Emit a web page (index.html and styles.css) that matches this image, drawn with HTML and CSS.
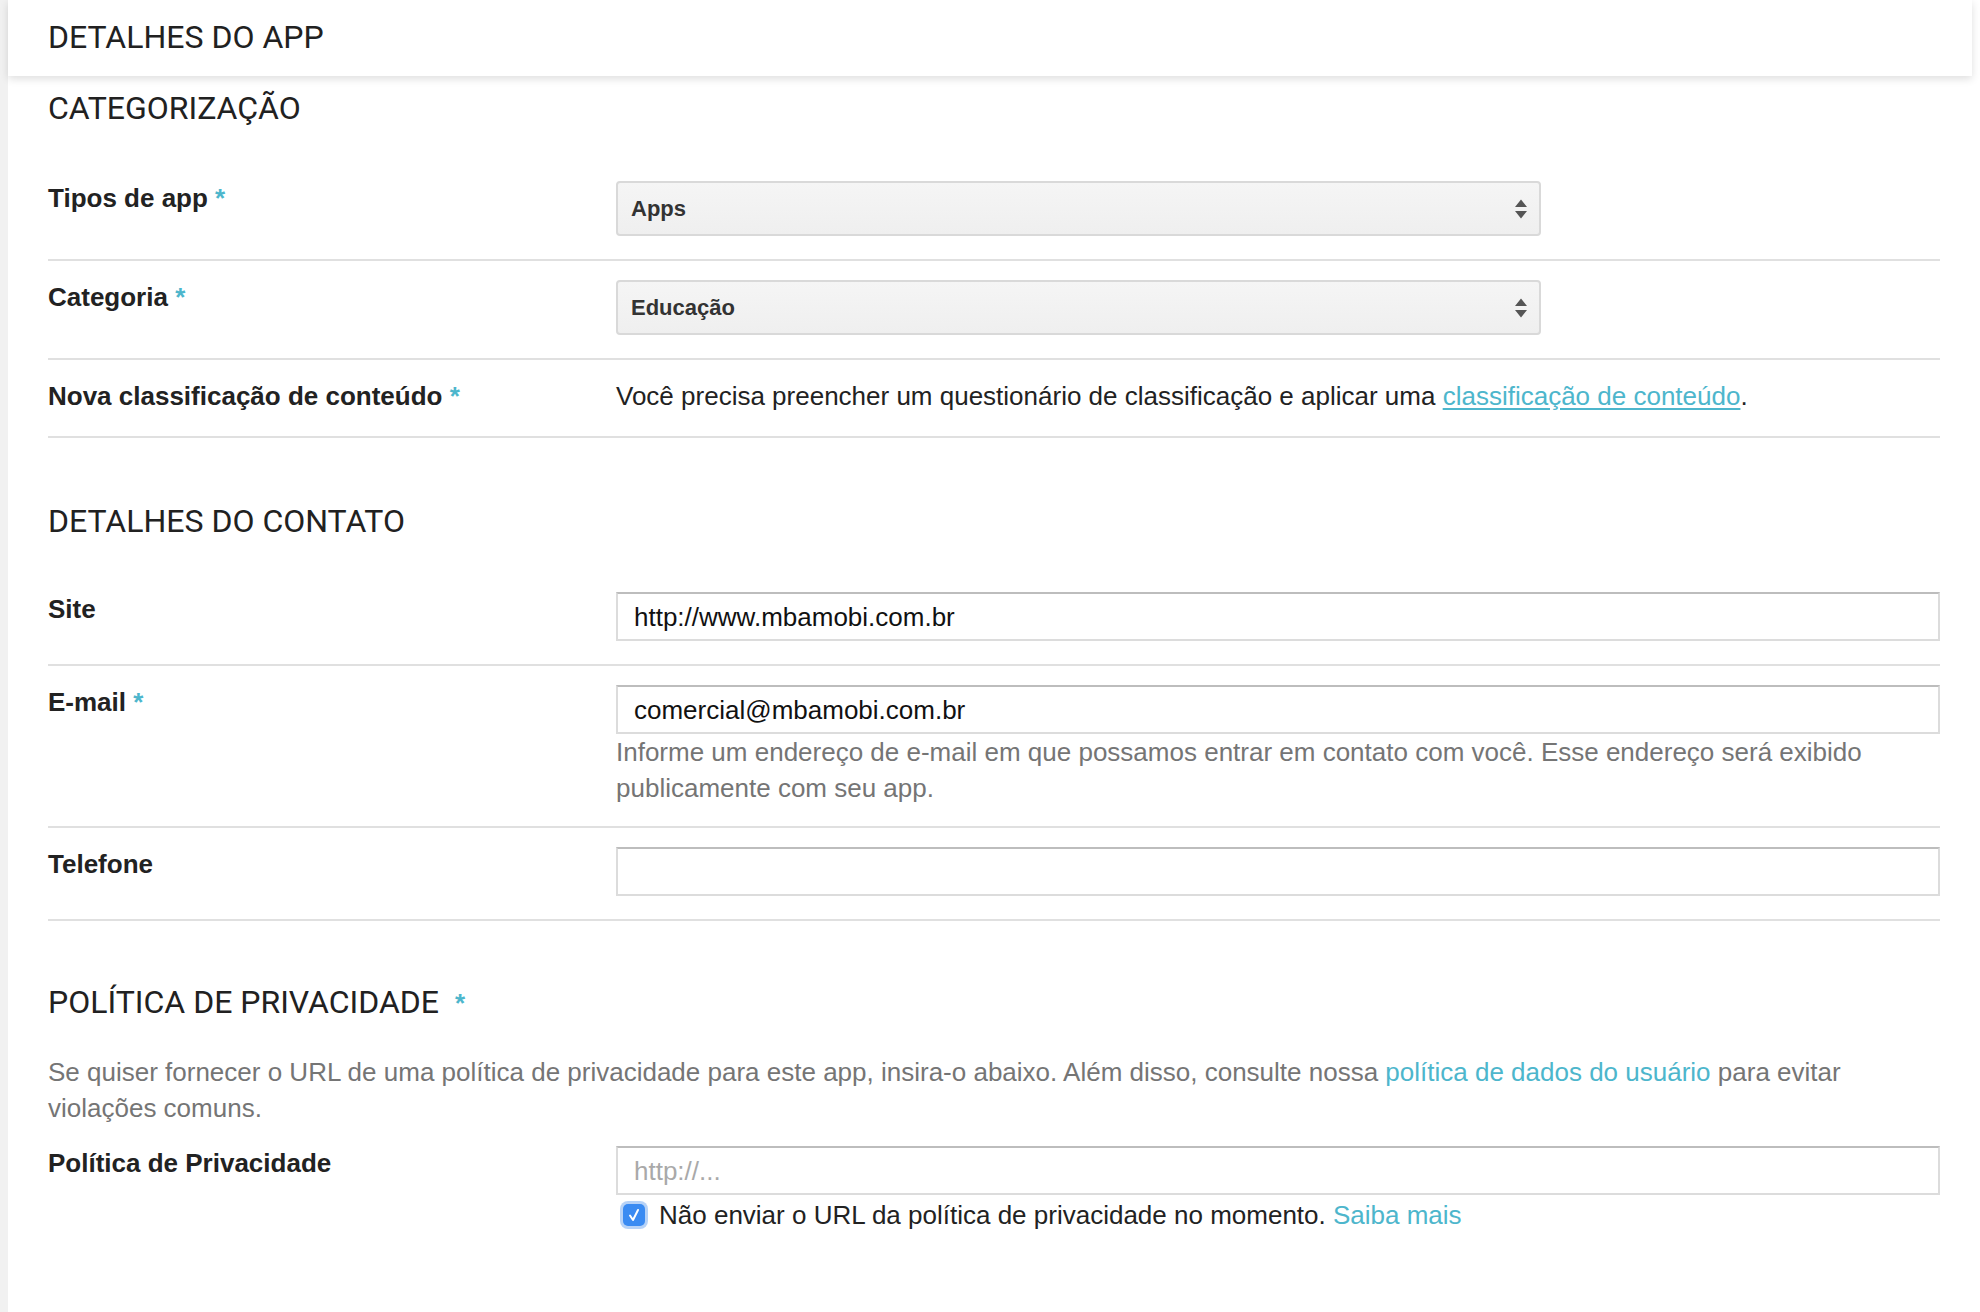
FILE: index.html
```html
<!DOCTYPE html>
<html lang="pt-BR">
<head>
<meta charset="utf-8">
<title>Detalhes do app</title>
<link rel="stylesheet" href="styles.css">
</head>
<body>
<div class="page">
  <header class="topbar">
    <h1 class="topbar-title">DETALHES DO APP</h1>
  </header>
  <main class="content">
    <h2 class="section-title first">CATEGORIZAÇÃO</h2>

    <div class="row">
      <div class="label">Tipos de app <span class="req">*</span></div>
      <div class="field">
        <div class="select">
          <span class="select-value">Apps</span>
          <svg class="select-arrows" width="14" height="22" viewBox="0 0 14 22"><path d="M1 9 L7 1.5 L13 9 Z M1 13 L13 13 L7 20.5 Z" fill="#555"/></svg>
        </div>
      </div>
    </div>

    <div class="row">
      <div class="label">Categoria <span class="req">*</span></div>
      <div class="field">
        <div class="select">
          <span class="select-value">Educação</span>
          <svg class="select-arrows" width="14" height="22" viewBox="0 0 14 22"><path d="M1 9 L7 1.5 L13 9 Z M1 13 L13 13 L7 20.5 Z" fill="#555"/></svg>
        </div>
      </div>
    </div>

    <div class="row">
      <div class="label">Nova classificação de conteúdo <span class="req">*</span></div>
      <div class="field text">Você precisa preencher um questionário de classificação e aplicar uma <a class="link underline" href="#">classificação de conteúdo</a>.</div>
    </div>

    <h2 class="section-title">DETALHES DO CONTATO</h2>

    <div class="row">
      <div class="label">Site</div>
      <div class="field">
        <div class="input">http://www.mbamobi.com.br</div>
      </div>
    </div>

    <div class="row">
      <div class="label">E-mail <span class="req">*</span></div>
      <div class="field">
        <div class="input">comercial@mbamobi.com.br</div>
        <p class="help">Informe um endereço de e-mail em que possamos entrar em contato com você. Esse endereço será exibido publicamente com seu app.</p>
      </div>
    </div>

    <div class="row">
      <div class="label">Telefone</div>
      <div class="field">
        <div class="input"></div>
      </div>
    </div>

    <h2 class="section-title third">POLÍTICA DE PRIVACIDADE <span class="req heading-req">*</span></h2>

    <p class="intro">Se quiser fornecer o URL de uma política de privacidade para este app, insira-o abaixo. Além disso, consulte nossa <a class="link" href="#">política de dados do usuário</a> para evitar violações comuns.</p>

    <div class="row plain">
      <div class="label">Política de Privacidade</div>
      <div class="field">
        <div class="input placeholder">http://...</div>
        <div class="check-line">
          <span class="checkbox"><svg width="22" height="22" viewBox="0 0 22 22"><path d="M7 11.5 L10 16 L15 6" fill="none" stroke="#fff" stroke-width="2" stroke-linecap="round" stroke-linejoin="round"/></svg></span>
          <span class="check-text">Não enviar o URL da política de privacidade no momento. <a class="link" href="#">Saiba mais</a></span>
        </div>
      </div>
    </div>
  </main>
</div>
</body>
</html>
```

FILE: styles.css
```css
html, body {
  margin: 0;
  padding: 0;
}

body {
  background: #f1f1f1;
  font-family: "Liberation Sans", Arial, Helvetica, sans-serif;
  color: #222;
}

.page {
  margin-left: 8px;
  background: #fff;
  min-height: 1312px;
}

.topbar {
  height: 76px;
  margin-right: 8px;
  background: #fff;
  box-shadow: 0 3px 8px rgba(0, 0, 0, 0.13);
  position: relative;
  z-index: 1;
}

.topbar-title {
  margin: 0;
  padding-left: 40px;
  font-family: Roboto, "Liberation Sans", sans-serif;
  font-weight: 400;
  font-size: 32px;
  line-height: 74px;
  color: #212121;
}

.content {
  padding: 0 40px;
}

.section-title {
  margin: 63px 0 32px;
  font-family: Roboto, "Liberation Sans", sans-serif;
  font-weight: 400;
  font-size: 32px;
  line-height: 40px;
  color: #212121;
}

.section-title.first {
  margin-top: 12px;
  margin-bottom: 34px;
}

.section-title.third {
  margin-top: 61px;
}

.heading-req {
  font-family: "Liberation Sans", Arial, sans-serif;
  font-size: 26px;
  font-weight: 700;
  margin-left: 8px;
  vertical-align: top;
  position: relative;
  top: 1px;
}

.row {
  display: grid;
  grid-template-columns: 568px 1fr;
  padding: 19px 0 23px;
  border-bottom: 2px solid #e0e0e0;
}

.row.plain {
  border-bottom: none;
  padding-top: 20px;
}

.label {
  font-size: 26px;
  font-weight: 700;
  line-height: 34px;
  color: #222;
}

.req {
  color: #4db6cc;
  font-weight: 700;
}

.field {
  font-size: 26px;
  line-height: 34px;
}

.text {
  color: #222;
}

.link {
  color: #4db6cc;
  text-decoration: none;
}

.link.underline {
  text-decoration: underline;
  text-underline-offset: 3px;
}

.select {
  box-sizing: border-box;
  width: 925px;
  height: 55px;
  border: 2px solid #d9d9d9;
  border-radius: 4px;
  background: linear-gradient(#f5f5f5, #efefef);
  display: flex;
  align-items: center;
  justify-content: space-between;
  padding: 0 11px 0 13px;
}

.select-value {
  font-size: 22px;
  font-weight: 700;
  color: #333;
}

.input {
  box-sizing: border-box;
  height: 49px;
  border: 2px solid #dcdcdc;
  border-top-color: #bdbdbd;
  background: #fff;
  padding: 0 16px;
  display: flex;
  align-items: center;
  font-size: 26px;
  color: #111;
}

.input.placeholder {
  color: #a9a9a9;
}

.help {
  margin: 0 0 -3px;
  font-size: 26px;
  line-height: 36px;
  color: #757575;
}

.intro {
  margin: 0;
  font-size: 26px;
  line-height: 36px;
  color: #757575;
}

.check-line {
  display: flex;
  align-items: center;
  margin-top: 3px;
}

.checkbox {
  width: 22px;
  height: 22px;
  margin-left: 7px;
  margin-right: 14px;
  border-radius: 5px;
  background: #3a8bf2;
  box-shadow: 0 0 0 3px rgba(110, 165, 240, 0.5);
  display: flex;
  flex-shrink: 0;
}

.check-text {
  color: #222;
}
```
